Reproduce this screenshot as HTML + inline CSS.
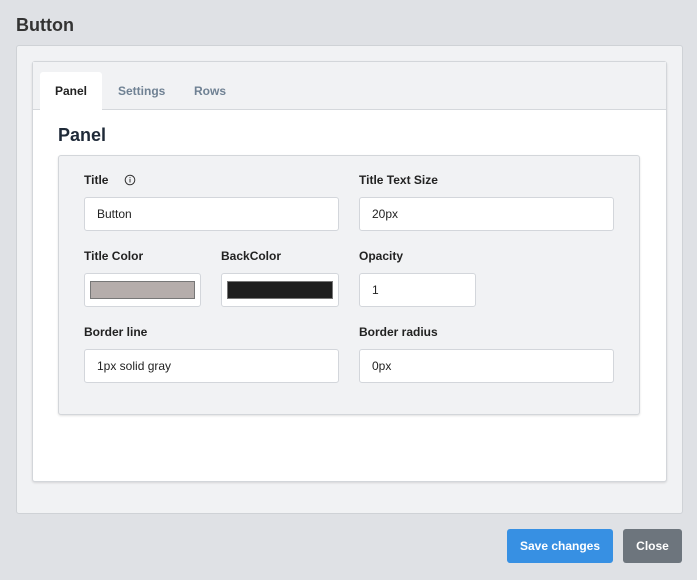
<html><head><style>
body{margin:0;width:697px;height:580px;background:#dfe1e5;font-family:"Liberation Sans",sans-serif;position:relative;overflow:hidden}
.a{position:absolute;box-sizing:border-box}
.lbl{position:absolute;font-size:12px;font-weight:bold;color:#222}
.inp{position:absolute;box-sizing:border-box;background:#fff;border:1px solid #d3d6db;border-radius:3px;height:34px;font-size:12px;color:#222;padding:0 12px;line-height:32px}
.sw{position:absolute;left:5px;right:5px;top:7px;bottom:7px;border:1px solid #777}
</style></head><body>
<div class="a" style="left:16px;top:15px;font-size:18px;font-weight:bold;color:#333">Button</div>
<div class="a" style="left:16px;top:45px;width:667px;height:469px;background:#f1f2f4;border:1px solid #cfd2d6;border-radius:3px"></div>
<div class="a" style="left:32px;top:61px;width:635px;height:421px;background:#fff;border:1px solid #d3d6da;border-radius:3px;box-shadow:0 1px 2px rgba(0,0,0,.12)"></div>
<div class="a" style="left:33px;top:62px;width:633px;height:48px;background:#f1f2f4;border-bottom:1px solid #d5d8dc"></div>
<div class="a" style="left:40px;top:72px;width:62px;height:39px;background:#fff;border-radius:3px 3px 0 0"></div>
<div class="a" style="left:55px;top:84px;font-size:12px;font-weight:bold;color:#222">Panel</div>
<div class="a" style="left:118px;top:84px;font-size:12px;font-weight:bold;color:#6f8193">Settings</div>
<div class="a" style="left:194px;top:84px;font-size:12px;font-weight:bold;color:#6f8193">Rows</div>
<div class="a" style="left:58px;top:125px;font-size:18px;font-weight:bold;color:#1f2a38">Panel</div>
<div class="a" style="left:58px;top:155px;width:582px;height:260px;background:#f1f2f4;border:1px solid #d3d6da;border-radius:3px;box-shadow:0 1px 2px rgba(0,0,0,.12)"></div>
<div class="lbl" style="left:84px;top:173px">Title</div>
<svg class="a" style="left:124px;top:174px" width="12" height="12" viewBox="0 0 12 12"><circle cx="6" cy="6" r="4.8" fill="none" stroke="#333" stroke-width="1"/><rect x="5.5" y="5" width="1" height="3.5" fill="#333"/><rect x="5.5" y="3.2" width="1" height="1" fill="#333"/></svg>
<div class="lbl" style="left:359px;top:173px">Title Text Size</div>
<div class="inp" style="left:84px;top:197px;width:255px">Button</div>
<div class="inp" style="left:359px;top:197px;width:255px">20px</div>
<div class="lbl" style="left:84px;top:249px">Title Color</div>
<div class="lbl" style="left:221px;top:249px">BackColor</div>
<div class="lbl" style="left:359px;top:249px">Opacity</div>
<div class="inp" style="left:84px;top:273px;width:117px"><div class="sw" style="background:#b5adab"></div></div>
<div class="inp" style="left:221px;top:273px;width:118px"><div class="sw" style="background:#1e1e1e"></div></div>
<div class="inp" style="left:359px;top:273px;width:117px">1</div>
<div class="lbl" style="left:84px;top:325px">Border line</div>
<div class="lbl" style="left:359px;top:325px">Border radius</div>
<div class="inp" style="left:84px;top:349px;width:255px">1px solid gray</div>
<div class="inp" style="left:359px;top:349px;width:255px">0px</div>
<div class="a" style="left:507px;top:529px;width:106px;height:34px;background:#3790e3;border-radius:3px;color:#fff;font-size:12px;font-weight:bold;text-align:center;line-height:34px">Save changes</div>
<div class="a" style="left:623px;top:529px;width:59px;height:34px;background:#6d757d;border-radius:3px;color:#fff;font-size:12px;font-weight:bold;text-align:center;line-height:34px">Close</div>
</body></html>
